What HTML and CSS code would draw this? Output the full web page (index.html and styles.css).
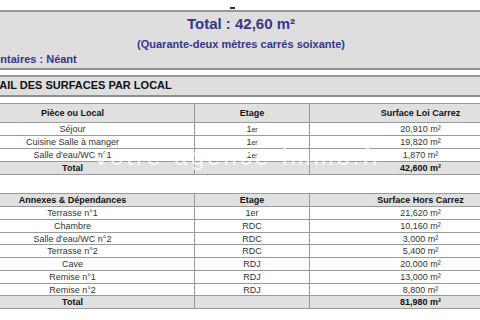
FILE: index.html
```html
<!DOCTYPE html>
<html lang="fr">
<head>
<meta charset="utf-8">
<title>Surfaces</title>
<link rel="stylesheet" href="styles.css">
</head>
<body>
<div class="page">
  <div class="topgap"><span class="mark"></span></div>
  <div class="box summary">
    <div class="total">Total : 42,60 m²</div>
    <div class="words">(Quarante-deux mètres carrés soixante)</div>
    <div class="comment">Commentaires : Néant</div>
  </div>
  <div class="box title">DÉTAIL DES SURFACES PAR LOCAL</div>

  <div class="grid t1">
    <div class="row head"><div>Pièce ou Local</div><div>Etage</div><div>Surface Loi Carrez</div></div>
    <div class="row"><div>Séjour</div><div>1<span class="sm">er</span></div><div>20,910 m²</div></div>
    <div class="row"><div>Cuisine Salle à manger</div><div>1<span class="sm">er</span></div><div>19,820 m²</div></div>
    <div class="row"><div>Salle d'eau/WC n°1</div><div>1<span class="sm">er</span></div><div>1,870 m²</div></div>
    <div class="row sum"><div>Total</div><div></div><div>42,600 m²</div></div>
  </div>

  <div class="grid t2">
    <div class="row head"><div>Annexes &amp; Dépendances</div><div>Etage</div><div>Surface Hors Carrez</div></div>
    <div class="row"><div>Terrasse n°1</div><div>1er</div><div>21,620 m²</div></div>
    <div class="row"><div>Chambre</div><div>RDC</div><div>10,160 m²</div></div>
    <div class="row"><div>Salle d'eau/WC n°2</div><div>RDC</div><div>3,000 m²</div></div>
    <div class="row"><div>Terrasse n°2</div><div>RDC</div><div>5,400 m²</div></div>
    <div class="row"><div>Cave</div><div>RDJ</div><div>20,000 m²</div></div>
    <div class="row"><div>Remise n°1</div><div>RDJ</div><div>13,000 m²</div></div>
    <div class="row"><div>Remise n°2</div><div>RDJ</div><div>8,800 m²</div></div>
    <div class="row sum"><div>Total</div><div></div><div>81,980 m²</div></div>
  </div>

  <div class="watermark">votre-agence-immo.fr</div>
</div>
</body>
</html>
```
FILE: styles.css
```css
html, body {
  margin: 0;
  padding: 0;
  background: #ffffff;
}
body {
  width: 480px;
  height: 320px;
  overflow: hidden;
  font-family: "Liberation Sans", Arial, sans-serif;
}
.page {
  position: relative;
  width: 580px;
  margin-left: -49px;
}
.topgap {
  height: 10px;
  position: relative;
}
.mark {
  display: block;
  position: absolute;
  left: 279px;
  top: 7px;
  width: 5px;
  height: 2px;
  background: #333;
}
.box {
  background: #dedede;
  border-top: 2px solid #9a9a9a;
  border-bottom: 2px solid #8e8e8e;
  box-sizing: border-box;
}
.summary {
  height: 60px;
  padding-top: 3px;
  color: #36368a;
  font-weight: bold;
}
.total {
  text-align: center;
  font-size: 15px;
  line-height: 18px;
}
.words {
  text-align: center;
  font-size: 11px;
  line-height: 14px;
  margin-top: 4px;
}
.comment {
  font-size: 11px;
  line-height: 14px;
  margin-top: 1px;
  padding-left: 9px;
}
.title {
  margin-top: 5px;
  height: 22px;
  padding-left: 27px;
  font-size: 11px;
  font-weight: bold;
  line-height: 17px;
  color: #111;
}
.grid {
  border-top: 1px solid #9a9a9a;
  color: #333;
  font-size: 9px;
}
.t1 { margin-top: 6px; }
.t2 { margin-top: 18px; }
.row {
  display: grid;
  grid-template-columns: 244px 115px 221px;
  box-sizing: border-box;
  height: 13px;
  border-bottom: 1px solid #9a9a9a;
  background: #ffffff;
}
.t2 .row { height: 12.75px; }
.row > div {
  text-align: center;
  line-height: 12px;
  border-right: 1px solid #9a9a9a;
  white-space: nowrap;
}
.row > div:last-child { border-right: none; }
.t1 .head { height: 19px; }
.t1 .head > div { line-height: 18px; }
.t2 .head { height: 13px; }
.head, .sum {
  background: #e0e0e0;
  font-weight: bold;
  color: #111;
}
.sm { font-size: 7px; }
.watermark {
  position: absolute;
  left: 144px;
  top: 143px;
  font-size: 24px;
  letter-spacing: 3px;
  line-height: 28px;
  color: rgba(255, 255, 255, 0.78);
  white-space: nowrap;
  pointer-events: none;
}
```
